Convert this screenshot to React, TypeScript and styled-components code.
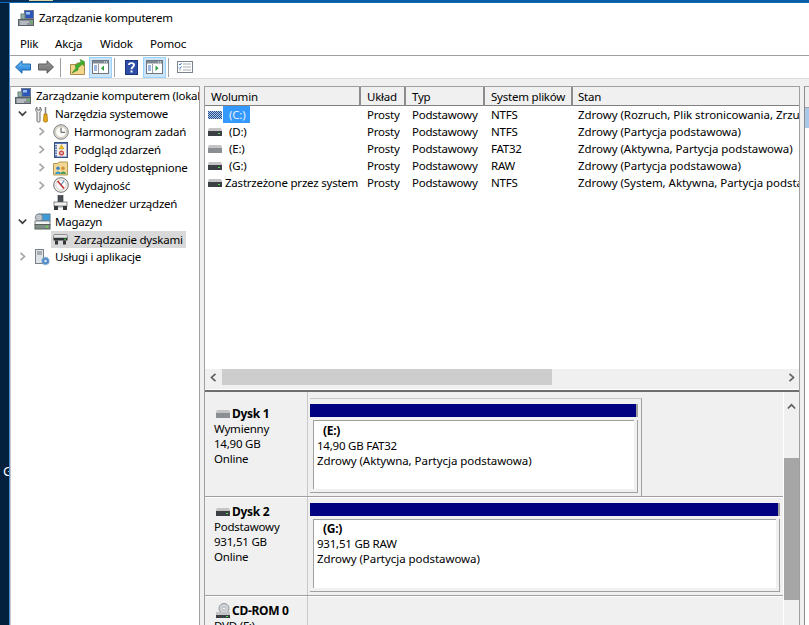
import React from "react";
import styled, { createGlobalStyle } from "styled-components";

const Global = createGlobalStyle`
  html, body { margin: 0; padding: 0; height: 100%; overflow: hidden; background: #03203c; }
  #root { height: 625px; }
  * { box-sizing: border-box; }
  svg { flex: none; display: block; }
`;

const Page = styled.div`
  width: 809px; height: 625px; overflow: hidden;
  display: flex; flex-direction: column;
  font: 11.5px/15px "Noto Sans", "Liberation Sans", sans-serif;
  letter-spacing: -0.22px;
  color: #000;
`;
const TopEdge = styled.div`
  height: 3px; flex: none; background: linear-gradient(90deg, #06274c, #0a5ea8 20%);
  border-bottom: 1px solid #0f6cb4; padding-left: 29px;
`;
const TopMark = styled.div`width: 24px; height: 1px; background: #d8d8a8;`;
const Desk = styled.div`flex: 1; min-height: 0; display: flex;`;
const Wallpaper = styled.div`
  width: 9px; flex: none; overflow: hidden; background: #03203c; color: #fff;
  padding: 459px 0 0 3px; font-size: 13px; line-height: 18px;
`;
const Win = styled.div`
  flex: 1; min-width: 0; background: #fff; border-left: 1px solid #4a90d8;
  display: flex; flex-direction: column;
`;
const TitleBar = styled.div`
  height: 31px; flex: none; display: flex; align-items: center; gap: 5px; padding: 0 0 1px 8px;
`;
const TitleText = styled.span`margin-top: -2px;`;
const MenuBar = styled.div`
  height: 22px; flex: none; display: flex; align-items: center; border-bottom: 1px solid #a0a0a0; padding: 0 0 3px 10px;
`;
const MenuItem = styled.span<{ $w: number }>`width: ${p => p.$w}px;`;
const Toolbar = styled.div`
  height: 23px; flex: none; display: flex; align-items: center; border-bottom: 1px solid #dcdcdc; padding-left: 5px;
`;
const ToolSlot = styled.div<{ $w: number; $on?: boolean }>`
  width: ${p => p.$w}px; height: 21px; flex: none; display: flex; align-items: center; justify-content: center;
  background: ${p => (p.$on ? "#cce4f8" : "transparent")};
  border: ${p => (p.$on ? "1px solid #99d1ff" : "none")};
`;
const ToolSep = styled.div`width: 1px; height: 19px; background: #a0a0a0; flex: none;`;
const Gap = styled.div<{ $w: number }>`width: ${p => p.$w}px; flex: none;`;

const Body = styled.div`
  flex: 1; min-height: 0; background: #f0f0f0; display: flex; padding-top: 7px; gap: 4px;
`;
const TreePane = styled.div`
  width: 190px; flex: none; background: #fff; border: 1px solid #a0a0a0; border-left-color: #c8c8c8; border-bottom: none;
  overflow: hidden;
`;
const TreeRow = styled.div<{ $level: number }>`
  height: 17.9px; display: flex; align-items: center; white-space: nowrap;
  padding-left: ${p => [4, 4, 23][p.$level]}px;
`;
const Chevron = styled.span`width: 19px; height: 16px; flex: none; display: flex; align-items: center; padding-left: 3px;`;
const TreeIcon = styled.span`width: 16px; height: 16px; flex: none; display: flex; margin-right: 5px;`;
const TreeLabel = styled.span`height: 17px; display: flex; align-items: center;`;
const SelectedWrap = styled.span`display: flex; align-items: center; background: #d9d9d9; height: 17px; padding: 0 3px 0 2px; margin-left: 17px; gap: 6px;`;

const Center = styled.div`
  width: 596px; flex: none; display: flex; flex-direction: column;
  border: 1px solid #a0a0a0; border-bottom: none; background: #f0f0f0;
`;
const Columns = "156px 45px 79px 88px 1fr";
const Header = styled.div`
  height: 19px; flex: none; display: grid; grid-template-columns: ${Columns};
  background: #f0f0f0; border-bottom: 1px solid #808080;
`;
const HeadCell = styled.div<{ $last?: boolean }>`
  padding: 1px 0 0 ${p => (p.$last ? 5 : 6)}px; line-height: 18px; border-right: ${p => (p.$last ? "none" : "2px solid #8c8c8c")};
`;
const Rows = styled.div`flex: 1; min-height: 0; background: #fff; overflow: hidden;`;
const Row = styled.div`
  height: 17px; display: grid; grid-template-columns: ${Columns}; white-space: nowrap; line-height: 18px;
`;
const Cell = styled.div`padding-left: 6px; overflow: hidden;`;
const StateCell = styled.div`padding-left: 5px; overflow: hidden; letter-spacing: -0.05px;`;
const VolCell = styled.div`display: flex; align-items: center; padding-left: 3px; overflow: hidden;`;
const VolName = styled.span<{ $selected?: boolean; $indent: number }>`
  margin-left: 1px; padding: 0 5px 0 ${p => p.$indent}px; height: 17px;
  background: ${p => (p.$selected ? "#3399ff" : "transparent")};
  color: ${p => (p.$selected ? "#e8f0fa" : "#000")};
`;
const HScroll = styled.div`
  height: 16px; flex: none; display: flex; align-items: center; background: #f0f0f0;
`;
const HThumb = styled.div`width: 330px; height: 16px; background: #cdcdcd; margin-left: 1px;`;
const ScrollBtn = styled.div`width: 16px; height: 16px; flex: none; display: flex; align-items: center; justify-content: center;`;
const Spacer = styled.div`flex: 1;`;
const HSplit = styled.div`height: 7px; flex: none; background: #f0f0f0; border-bottom: 2px solid #6e6e6e; box-shadow: inset 0 -1px 0 #fff;`;

const Lower = styled.div`height: 233px; flex: none; display: flex; overflow: hidden;`;
const Disks = styled.div`flex: 1; min-width: 0; display: flex; flex-direction: column;`;
const DiskRow = styled.div<{ $h: number }>`
  height: ${p => p.$h}px; flex: none; display: flex; border-bottom: 1px solid #a0a0a0; box-shadow: 0 1px 0 #fff;
`;
const DiskLabel = styled.div<{ $top: number }>`
  width: 103px; flex: none; padding: ${p => p.$top}px 0 0 9px; border-right: 1px solid #c8c8c8; white-space: nowrap;
`;
const DiskName = styled.div`display: flex; align-items: center; height: 15px; gap: 2px; font-weight: 700; font-size: 12px; margin-left: 2px; letter-spacing: -0.3px;`;
const PartArea = styled.div<{ $top: number }>`flex: 1; min-width: 0; padding: ${p => p.$top}px 0 0 2px; display: flex;`;
const Outer = styled.div<{ $w?: number; $frame?: boolean }>`
  width: ${p => (p.$w ? `${p.$w}px` : "auto")}; flex: ${p => (p.$w ? "none" : "1")};
  padding: 5px 3px 3px 0;
  border-top: ${p => (p.$frame ? "1px solid #c8c8c8" : "none")};
  border-right: ${p => (p.$frame ? "1px solid #a0a0a0" : "none")};
`;
const Navy = styled.div`height: 13px; background: #000080; border-right: 2px solid #a0a0a0;`;
const Inner = styled.div`
  border-right: 1px solid #a0a0a0; border-bottom: 1px solid #a0a0a0; padding: 0 3px 3px 3px;
`;
const Volume = styled.div<{ $top: number }>`
  height: 69px; margin-top: 3px; background: #fff; border: 1px solid #a0a0a0; border-width: 1px 0 0 1px;
  padding: ${p => p.$top}px 0 0 3px; white-space: nowrap;
`;
const VolTitle = styled.div`font-weight: 700; font-size: 12px; line-height: 14px; margin-left: 6px; letter-spacing: -0.3px;`;
const VolStatus = styled.div`letter-spacing: -0.05px;`;
const VScroll = styled.div`
  width: 16px; flex: none; background: #f0f0f0; display: flex; flex-direction: column; border-left: 1px solid #fff;
`;
const VArrow = styled.div`height: 20px; flex: none; display: flex; align-items: flex-end; justify-content: center; padding-bottom: 1px;`;
const VThumb = styled.div`height: 142px; background: #a6a6a6; margin-top: 46px;`;
const ActionsPane = styled.div`
  flex: 1; min-width: 0; border-left: 1px solid #8c8c8c; border-top: 1px solid #a0a0a0; background: #fff;
  display: flex; flex-direction: column;
`;
const ActionsHead = styled.div`height: 21px; background: #f0f0f0; border-bottom: 1px solid #a0a0a0; flex: none;`;
const ActionsTitle = styled.div`height: 20px; background: #aac8ea; flex: none;`;

/* ---------- icons ---------- */
const MmcIcon = () => (
  <svg width="16" height="16" viewBox="0 0 16 16">
    <rect x="6.5" y="0.5" width="9" height="8" fill="#2c55b8" stroke="#6d7a8c" />
    <rect x="8" y="2" width="4" height="2.5" fill="#9cc0f4" />
    <rect x="3" y="4" width="4" height="5" fill="#8fb0a8" stroke="#6e7e78" />
    <rect x="0.5" y="9.5" width="15" height="6" fill="#8b929a" stroke="#5a6068" />
    <path d="M2 12h9M2 14h7" stroke="#dfe3e6" strokeWidth="1" />
    <rect x="12.5" y="11" width="2" height="2" fill="#5cc04c" />
  </svg>
);
const Arrow = ({ dir, c1, c2, c3 }: { dir: "l" | "r"; c1: string; c2: string; c3: string }) => {
  const id = `ar-${dir}`;
  return (
    <svg width="16" height="14" viewBox="0 0 16 14">
      <defs>
        <linearGradient id={id} x1="0" y1="0" x2="0" y2="1">
          <stop offset="0" stopColor={c1} />
          <stop offset="1" stopColor={c2} />
        </linearGradient>
      </defs>
      <path
        d={dir === "l" ? "M0.5 7L7 0.8V4H15.5V10H7V13.2Z" : "M15.5 7L9 0.8V4H0.5V10H9V13.2Z"}
        fill={`url(#${id})`} stroke={c3} strokeWidth="1" strokeLinejoin="round"
      />
    </svg>
  );
};
const UpFolder = () => (
  <svg width="15" height="16" viewBox="0 0 15 16">
    <path d="M0.5 5.5H6L7 4H14.5V15.5H0.5Z" fill="#f2d68c" stroke="#a88c4c" />
    <path d="M2 14L6 9L5 6.5L11 3L10 0.5L14.5 2.5L13.5 7L12.5 5L8 9L8 11Z" fill="#3fae2e" stroke="#2a7f20" strokeWidth=".5" />
  </svg>
);
const PaneIcon = ({ arrow }: { arrow: "l" | "r" }) => (
  <svg width="17" height="14" viewBox="0 0 17 14">
    <rect x="0.5" y="0.5" width="16" height="13" fill="#fff" stroke="#6f7680" />
    <rect x="1" y="1" width="15" height="2.5" fill="#7f8791" />
    <path d="M12 2h1M14 2h1" stroke="#fff" />
    <path d="M6.5 4v9" stroke="#9aa0a8" />
    <path d="M2 6h3M2 8h3M2 10h3" stroke="#3a70c8" />
    <path d={arrow === "l" ? "M12 5.5V11L9 8.2Z" : "M9.5 5.5V11L12.5 8.2Z"} fill="#2f9e3c" />
  </svg>
);
const HelpIcon = () => (
  <svg width="13" height="15" viewBox="0 0 13 15">
    <rect width="13" height="15" fill="#2f4ea8" />
    <rect x="0.5" y="0.5" width="12" height="14" fill="none" stroke="#1d3380" />
    <path d="M4 5C4 2.5 9 2.5 9 5C9 7 6.5 7 6.5 9.3" fill="none" stroke="#fff" strokeWidth="1.9" />
    <rect x="5.5" y="10.5" width="2" height="2" fill="#fff" />
  </svg>
);
const ListIcon = () => (
  <svg width="16" height="12" viewBox="0 0 16 12">
    <rect x="0.5" y="0.5" width="15" height="11" fill="#fff" stroke="#7d838b" />
    <path d="M2 3l1 1 1.5-2M2 6.5l1 1 1.5-2" stroke="#3a78c8" fill="none" />
    <path d="M6 3h8M6 6h8M6 9h8M2 9h2" stroke="#a5abb2" />
  </svg>
);
const chevPaths = {
  r: "M2.5 0.8L6.5 4.5L2.5 8.2",
  l: "M6.5 0.8L2.5 4.5L6.5 8.2",
  d: "M0.8 2.5L4.5 6.2L8.2 2.5",
  u: "M0.8 6.5L4.5 2.8L8.2 6.5",
};
const Chev = ({ dir, color = "#a6a6a6" }: { dir: keyof typeof chevPaths; color?: string }) => (
  <svg width="9" height="9" viewBox="0 0 9 9">
    <path d={chevPaths[dir]} fill="none" stroke={color} strokeWidth="1.7" />
  </svg>
);
const ToolsIcon = () => (
  <svg width="16" height="17" viewBox="0 0 16 17">
    <path d="M3 1C1 3 1.5 5.5 3 6V15C3 16.5 6 16.5 6 15V6C7.5 5.5 8 3 6 1V4H3Z" fill="#e8e8e8" stroke="#6c6c6c" />
    <path d="M11.5 1V8" stroke="#888" strokeWidth="1.6" />
    <path d="M10 8H13L13.5 15C13.5 16.5 9.5 16.5 9.5 15Z" fill="#e8a818" stroke="#9a7010" strokeWidth=".7" />
  </svg>
);
const ClockIcon = () => (
  <svg width="16" height="16" viewBox="0 0 16 16">
    <circle cx="8" cy="8" r="7.3" fill="#e6dcc6" stroke="#7c8288" />
    <circle cx="8" cy="8" r="5.5" fill="#fbfaf4" stroke="#b0b4b8" strokeWidth=".6" />
    <path d="M8 3.5V8.3H12" fill="none" stroke="#4a5058" strokeWidth="1" />
  </svg>
);
const EventIcon = () => (
  <svg width="15" height="16" viewBox="0 0 15 16">
    <rect x="1.5" y="0.5" width="13" height="15" fill="#5a78b8" stroke="#39507e" />
    <rect x="4" y="2" width="9.5" height="12.5" fill="#f4f2e8" />
    <path d="M2 2.5h2M2 5h2M2 7.5h2M2 10h2M2 12.5h2" stroke="#e8e8e8" />
    <path d="M8.5 2.5L11 7H6Z" fill="#f0c020" stroke="#a88210" strokeWidth=".4" />
    <circle cx="8.5" cy="11" r="2.6" fill="#c84848" />
    <path d="M7.3 9.8l2.4 2.4M9.7 9.8l-2.4 2.4" stroke="#fff" strokeWidth=".8" />
  </svg>
);
const SharedIcon = () => (
  <svg width="15" height="16" viewBox="0 0 15 16">
    <path d="M0.5 3.5H5L6 2H14.5V15H0.5Z" fill="#f1d792" stroke="#b39a58" />
    <circle cx="5" cy="8.3" r="1.8" fill="#3f86c8" />
    <path d="M2 14C2 10.5 8 10.5 8 14Z" fill="#3a9ad0" />
    <circle cx="10" cy="8.3" r="1.8" fill="#d08f3c" />
    <path d="M7.5 14C7.5 10.5 13 10.5 13 14Z" fill="#4c9a58" />
  </svg>
);
const PerfIcon = () => (
  <svg width="16" height="16" viewBox="0 0 16 16">
    <circle cx="8" cy="8" r="7.3" fill="#f4f0e6" stroke="#6f7378" />
    <circle cx="8" cy="8" r="5" fill="#fff" stroke="#b8b8b8" strokeWidth=".6" />
    <path d="M4.5 4L11 11.5" stroke="#c83030" strokeWidth="1.6" />
    <path d="M11 3.5L8 8" stroke="#3a6ab0" strokeWidth="1" />
  </svg>
);
const DevMgrIcon = () => (
  <svg width="15" height="16" viewBox="0 0 15 16">
    <rect x="5" y="0.5" width="5" height="6.5" fill="#4a4f55" stroke="#2f3338" strokeWidth=".6" />
    <rect x="1" y="7" width="13" height="4" fill="#f2f2f2" stroke="#6a6a6a" strokeWidth=".8" />
    <rect x="1" y="11" width="4" height="4" fill="#35393e" />
    <rect x="10" y="11" width="4" height="4" fill="#35393e" />
    <rect x="5" y="11" width="5" height="1.5" fill="#9aa0a6" />
  </svg>
);
const StorageIcon = () => (
  <svg width="17" height="17" viewBox="0 0 17 17">
    <rect x="5" y="1" width="11" height="7" fill="#3f9ad8" stroke="#5a7a90" />
    <circle cx="5" cy="4.5" r="3.6" fill="#c6ccd2" stroke="#7a8088" />
    <circle cx="5" cy="4.5" r="1" fill="#fff" stroke="#7a8088" strokeWidth=".5" />
    <rect x="1" y="8" width="15" height="3.5" fill="#f3f4f4" stroke="#7d8288" />
    <rect x="1" y="11.5" width="15" height="4.5" fill="#7f8e86" stroke="#586058" />
    <rect x="12" y="13" width="2" height="1.5" fill="#6fdc4e" />
  </svg>
);
const DiskMgmtIcon = () => (
  <svg width="15" height="16" viewBox="0 0 15 16">
    <path d="M1.5 3.5H13.5L14.5 5V7H0.5V5Z" fill="#e4e4e4" stroke="#6b6b6b" strokeWidth=".7" />
    <rect x="0.5" y="7" width="14" height="2.5" fill="#2e3236" />
    <rect x="11" y="7.6" width="2" height="1.2" fill="#40c040" />
    <rect x="2" y="9.5" width="3" height="4" fill="#33373b" />
    <rect x="10" y="9.5" width="3" height="4" fill="#33373b" />
  </svg>
);
const ServicesIcon = () => (
  <svg width="16" height="17" viewBox="0 0 16 17">
    <rect x="1.5" y="0.5" width="8" height="14" fill="#dfe3e8" stroke="#7a8088" />
    <path d="M3 3h5M3 5h5" stroke="#6f7680" />
    <circle cx="11.5" cy="12" r="3.6" fill="#4f8bc8" stroke="#7ea6d0" strokeWidth="1.4" strokeDasharray="1.4 .8" />
    <circle cx="11.5" cy="12" r="1.2" fill="#e4edf6" />
  </svg>
);
const Drive = ({ kind }: { kind: "dark" | "gray" | "hatch" }) => (
  <svg width="14" height="8" viewBox="0 0 14 8">
    {kind === "hatch" ? (
      <>
        <defs>
          <pattern id="hatch" width="2" height="2" patternUnits="userSpaceOnUse">
            <rect width="2" height="2" fill="#a9c4e6" />
            <rect width="1" height="1" fill="#24508c" />
            <rect x="1" y="1" width="1" height="1" fill="#24508c" />
          </pattern>
        </defs>
        <rect width="14" height="8" fill="url(#hatch)" />
      </>
    ) : (
      <>
        <path d="M1 0H13L14 2V3H0V2Z" fill="#c4c4c4" />
        <rect x="0" y="3" width="14" height="5" fill={kind === "dark" ? "#3c4044" : "#8b8f93"} />
        {kind === "dark" && <rect x="10" y="5" width="2" height="1" fill="#50e050" />}
      </>
    )}
  </svg>
);
const CdIcon = () => (
  <svg width="14" height="16" viewBox="0 0 14 16">
    <circle cx="8" cy="5.5" r="5" fill="#d0d4d8" stroke="#8f9498" />
    <circle cx="8" cy="5.5" r="1.5" fill="#fff" stroke="#8f9498" strokeWidth=".6" />
    <rect x="0" y="9" width="14" height="3" fill="#c4c4c4" />
    <rect x="0" y="12" width="14" height="3" fill="#3c4044" />
    <rect x="10" y="13" width="2" height="1" fill="#50e050" />
  </svg>
);

const tree = [
  { level: 1, chev: "d", icon: <ToolsIcon />, label: "Narzędzia systemowe" },
  { level: 2, chev: "r", icon: <ClockIcon />, label: "Harmonogram zadań" },
  { level: 2, chev: "r", icon: <EventIcon />, label: "Podgląd zdarzeń" },
  { level: 2, chev: "r", icon: <SharedIcon />, label: "Foldery udostępnione" },
  { level: 2, chev: "r", icon: <PerfIcon />, label: "Wydajność" },
  { level: 2, chev: "", icon: <DevMgrIcon />, label: "Menedżer urządzeń" },
  { level: 1, chev: "d", icon: <StorageIcon />, label: "Magazyn" },
] as const;

const volumes = [
  { kind: "hatch", name: "(C:)", indent: 6, selected: true, fs: "NTFS", state: "Zdrowy (Rozruch, Plik stronicowania, Zrzut awaryjny, Partycja podstawowa)" },
  { kind: "dark", name: "(D:)", indent: 6, fs: "NTFS", state: "Zdrowy (Partycja podstawowa)" },
  { kind: "gray", name: "(E:)", indent: 6, fs: "FAT32", state: "Zdrowy (Aktywna, Partycja podstawowa)" },
  { kind: "dark", name: "(G:)", indent: 6, fs: "RAW", state: "Zdrowy (Partycja podstawowa)" },
  { kind: "dark", name: "Zastrzeżone przez system", indent: 2, fs: "NTFS", state: "Zdrowy (System, Aktywna, Partycja podstawowa)" },
] as const;

export default function App() {
  return (
    <Page>
      <Global />
      <TopEdge><TopMark /></TopEdge>
      <Desk>
        <Wallpaper>G</Wallpaper>
        <Win>
          <TitleBar>
            <MmcIcon />
            <TitleText>Zarządzanie komputerem</TitleText>
          </TitleBar>
          <MenuBar>
            <MenuItem $w={35}>Plik</MenuItem>
            <MenuItem $w={45}>Akcja</MenuItem>
            <MenuItem $w={50}>Widok</MenuItem>
            <MenuItem $w={50}>Pomoc</MenuItem>
          </MenuBar>
          <Toolbar>
            <ToolSlot $w={16}><Arrow dir="l" c1="#6cc0f4" c2="#1e78d4" c3="#1c68b0" /></ToolSlot>
            <Gap $w={7} />
            <ToolSlot $w={16}><Arrow dir="r" c1="#9a9a9a" c2="#6e6e6e" c3="#5c5c5c" /></ToolSlot>
            <Gap $w={6} />
            <ToolSep />
            <Gap $w={9} />
            <ToolSlot $w={15}><UpFolder /></ToolSlot>
            <Gap $w={4} />
            <ToolSlot $w={23} $on><PaneIcon arrow="l" /></ToolSlot>
            <Gap $w={2} />
            <ToolSep />
            <Gap $w={9} />
            <ToolSlot $w={14}><HelpIcon /></ToolSlot>
            <Gap $w={5} />
            <ToolSlot $w={23} $on><PaneIcon arrow="r" /></ToolSlot>
            <Gap $w={2} />
            <ToolSep />
            <Gap $w={8} />
            <ToolSlot $w={16}><ListIcon /></ToolSlot>
          </Toolbar>
          <Body>
            <TreePane>
              <TreeRow $level={0}>
                <TreeIcon><MmcIcon /></TreeIcon>
                <TreeLabel>Zarządzanie komputerem (lokalny)</TreeLabel>
              </TreeRow>
              {tree.map(t => (
                <TreeRow key={t.label} $level={t.level}>
                  <Chevron>{t.chev && <Chev dir={t.chev} color={t.chev === "d" ? "#404040" : "#a6a6a6"} />}</Chevron>
                  <TreeIcon>{t.icon}</TreeIcon>
                  <TreeLabel>{t.label}</TreeLabel>
                </TreeRow>
              ))}
              <TreeRow $level={2}>
                <SelectedWrap>
                  <DiskMgmtIcon />
                  <span>Zarządzanie dyskami</span>
                </SelectedWrap>
              </TreeRow>
              <TreeRow $level={1}>
                <Chevron><Chev dir="r" /></Chevron>
                <TreeIcon><ServicesIcon /></TreeIcon>
                <TreeLabel>Usługi i aplikacje</TreeLabel>
              </TreeRow>
            </TreePane>
            <Center>
              <Header>
                <HeadCell>Wolumin</HeadCell>
                <HeadCell>Układ</HeadCell>
                <HeadCell>Typ</HeadCell>
                <HeadCell>System plików</HeadCell>
                <HeadCell $last>Stan</HeadCell>
              </Header>
              <Rows>
                {volumes.map(v => (
                  <Row key={v.name}>
                    <VolCell>
                      <Drive kind={v.kind} />
                      <VolName $indent={v.indent} $selected={"selected" in v}>{v.name}</VolName>
                    </VolCell>
                    <Cell>Prosty</Cell>
                    <Cell>Podstawowy</Cell>
                    <Cell>{v.fs}</Cell>
                    <StateCell>{v.state}</StateCell>
                  </Row>
                ))}
              </Rows>
              <HScroll>
                <ScrollBtn><Chev dir="l" color="#606060" /></ScrollBtn>
                <HThumb />
                <Spacer />
                <ScrollBtn><Chev dir="r" color="#606060" /></ScrollBtn>
              </HScroll>
              <HSplit />
              <Lower>
                <Disks>
                  <DiskRow $h={105}>
                    <DiskLabel $top={14}>
                      <DiskName><Drive kind="gray" />Dysk 1</DiskName>
                      <div>Wymienny</div>
                      <div>14,90 GB</div>
                      <div>Online</div>
                    </DiskLabel>
                    <PartArea $top={6}>
                      <Outer $w={332} $frame>
                        <Navy />
                        <Inner>
                          <Volume $top={3}>
                            <VolTitle>(E:)</VolTitle>
                            <div>14,90 GB FAT32</div>
                            <VolStatus>Zdrowy (Aktywna, Partycja podstawowa)</VolStatus>
                          </Volume>
                        </Inner>
                      </Outer>
                    </PartArea>
                  </DiskRow>
                  <DiskRow $h={99}>
                    <DiskLabel $top={7}>
                      <DiskName><Drive kind="dark" />Dysk 2</DiskName>
                      <div>Podstawowy</div>
                      <div>931,51 GB</div>
                      <div>Online</div>
                    </DiskLabel>
                    <PartArea $top={1}>
                      <Outer>
                        <Navy />
                        <Inner>
                          <Volume $top={2}>
                            <VolTitle>(G:)</VolTitle>
                            <div>931,51 GB RAW</div>
                            <VolStatus>Zdrowy (Partycja podstawowa)</VolStatus>
                          </Volume>
                        </Inner>
                      </Outer>
                    </PartArea>
                  </DiskRow>
                  <DiskLabel $top={7}>
                    <DiskName><CdIcon />CD-ROM 0</DiskName>
                    <div>DVD (F:)</div>
                  </DiskLabel>
                </Disks>
                <VScroll>
                  <VArrow><Chev dir="u" color="#606060" /></VArrow>
                  <VThumb />
                </VScroll>
              </Lower>
            </Center>
            <ActionsPane>
              <ActionsHead />
              <ActionsTitle />
            </ActionsPane>
          </Body>
        </Win>
      </Desk>
    </Page>
  );
}
